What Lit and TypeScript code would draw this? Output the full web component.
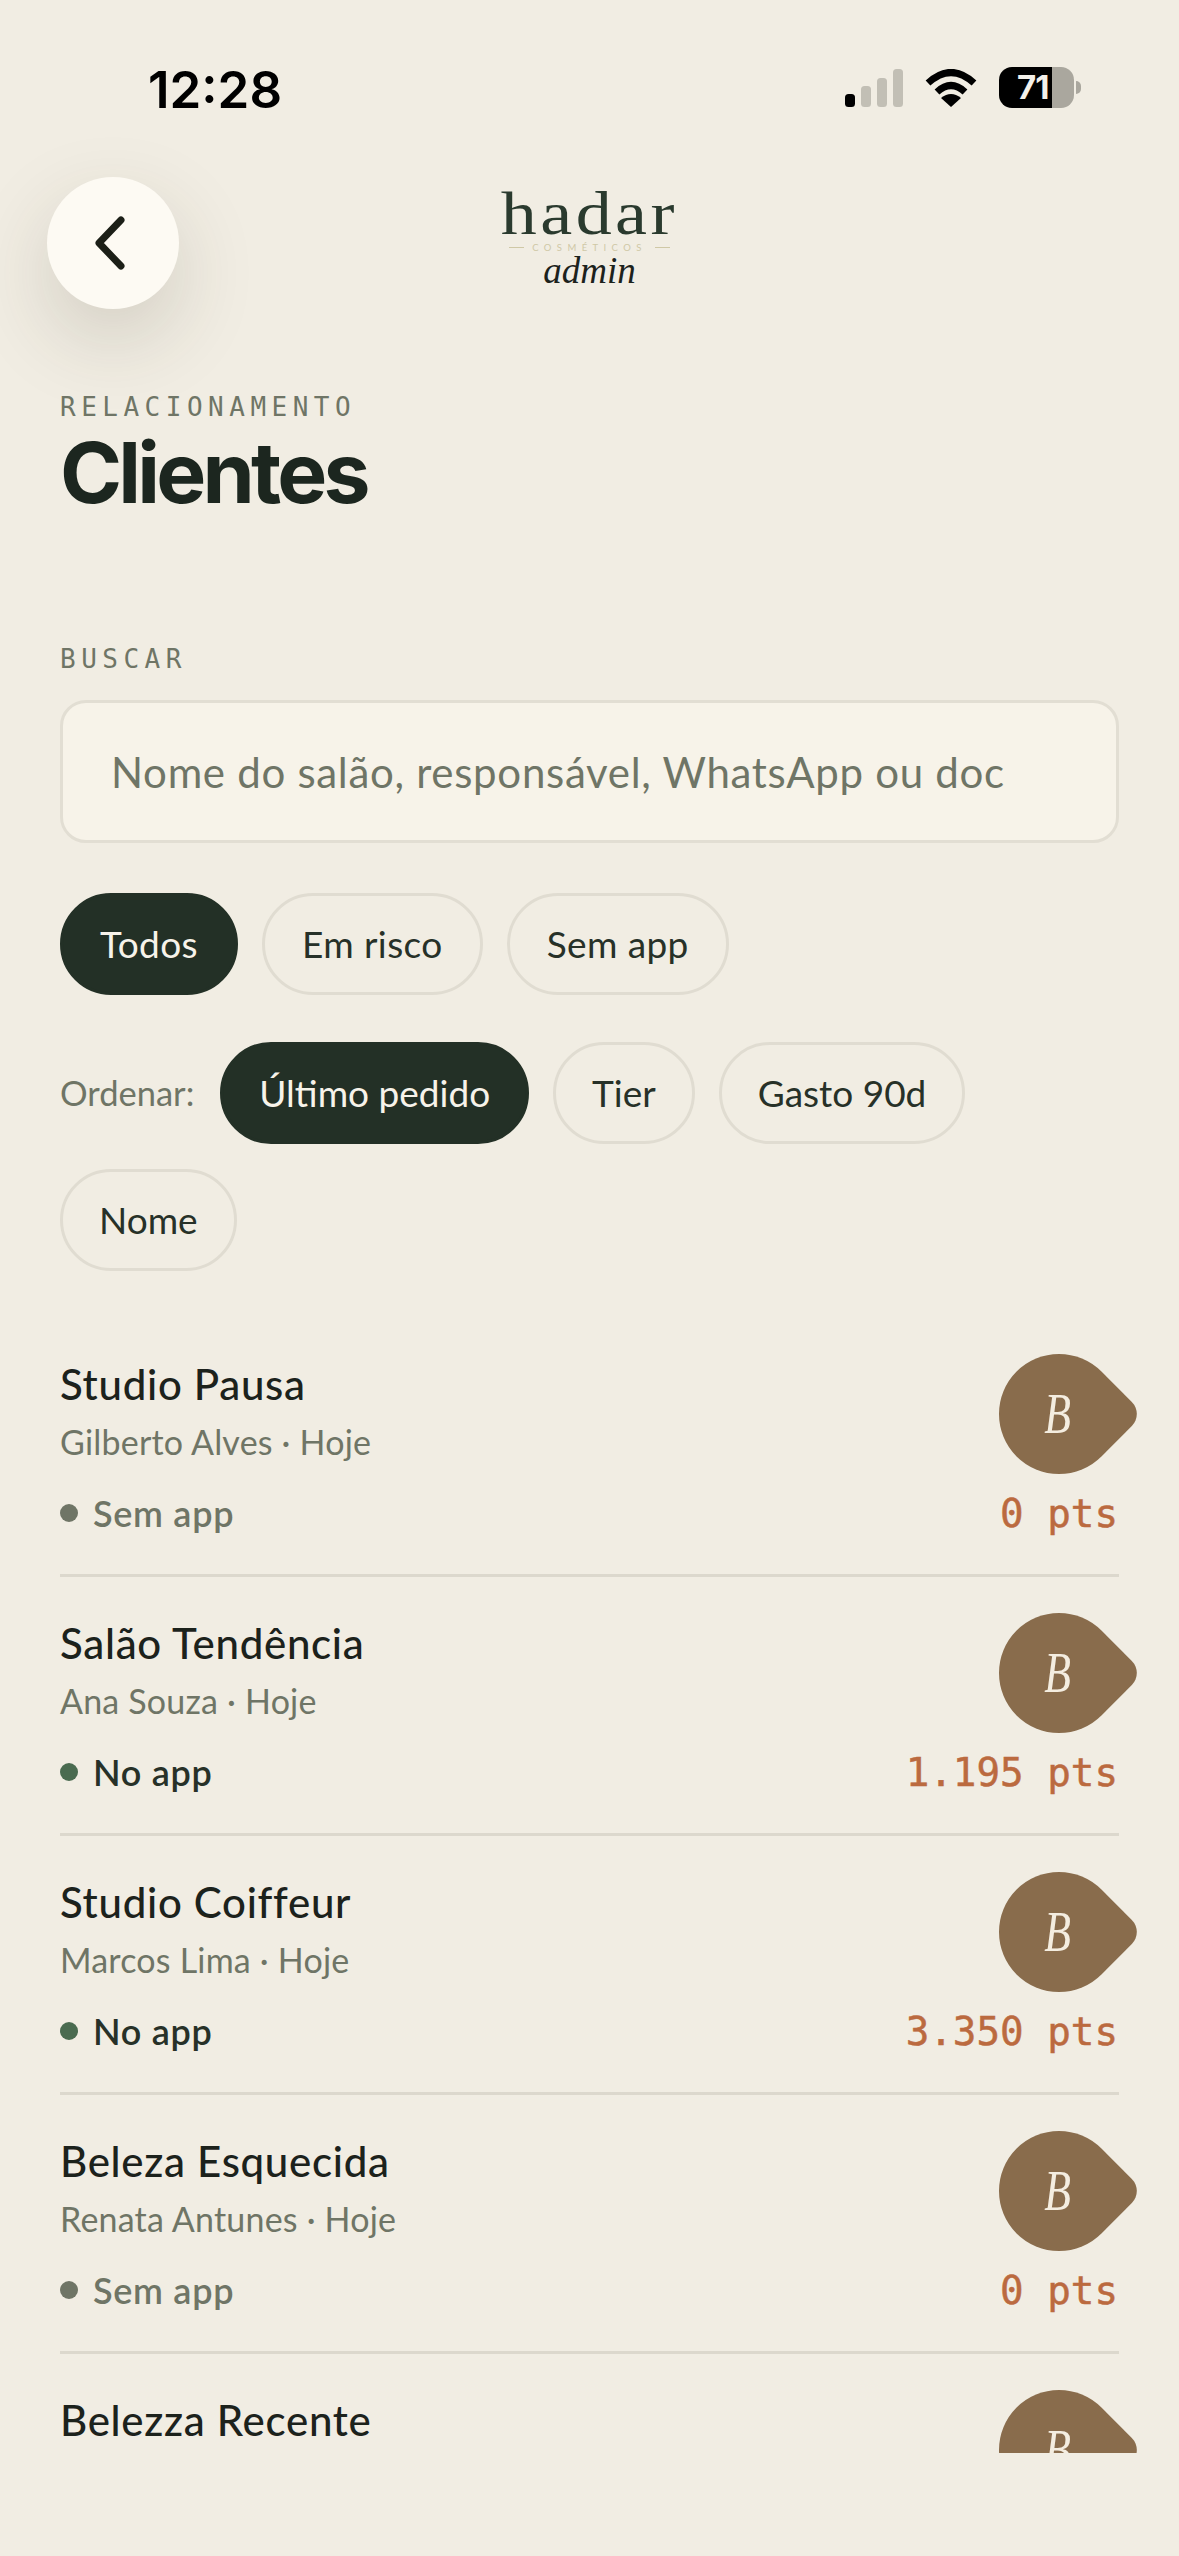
import { LitElement, html, css } from "lit";
import { customElement } from "lit/decorators.js";

type Row = { name: string; sub?: string; app?: boolean; pts?: string };
const rows: Row[] = [
  { name: "Studio Pausa", sub: "Gilberto Alves · Hoje", app: false, pts: "0 pts" },
  { name: "Salão Tendência", sub: "Ana Souza · Hoje", app: true, pts: "1.195 pts" },
  { name: "Studio Coiffeur", sub: "Marcos Lima · Hoje", app: true, pts: "3.350 pts" },
  { name: "Beleza Esquecida", sub: "Renata Antunes · Hoje", app: false, pts: "0 pts" },
  { name: "Belezza Recente" },
];

@customElement("app-root")
export class AppRoot extends LitElement {
  static styles = css`
    :host {
      display: block;
      width: 1179px;
      height: 2556px;
      background: #f1ede3;
      font-family: "Lato", "Open Sans", sans-serif;
      color: #1c221c;
      overflow: hidden;
    }
    .status {
      display: flex;
      justify-content: space-between;
      align-items: center;
      height: 41px;
      padding: 67px 98px 0 148px;
    }
    .time {
      font-family: "Inter", sans-serif;
      font-weight: 600;
      font-size: 51px;
      color: #000;
      line-height: 41px;
      margin-top: 4px;
    }
    .icons { display: flex; align-items: center; }
    .signal { width: 58px; height: 38px; display: block; }
    .wifi { width: 52px; height: 38px; display: block; margin-left: 22px; }
    .battery {
      display: flex;
      align-items: center;
      margin-left: 22px;
    }
    .batt-body {
      width: 75px;
      height: 41px;
      border-radius: 13px;
      background: linear-gradient(90deg, #000 0 53px, #aaa79e 53px);
      color: #f4f1ea;
      font-family: "Inter", sans-serif;
      font-weight: 700;
      font-size: 33px;
      line-height: 41px;
      text-align: left;
      padding-left: 18px;
      box-sizing: border-box;
      letter-spacing: -1px;
    }
    .batt-nub {
      width: 5px;
      height: 13px;
      margin-left: 2px;
      background: #aaa79e;
      border-radius: 0 5px 5px 0;
    }
    .top {
      display: grid;
      grid-template-columns: 1fr auto 1fr;
      padding: 69px 47px 0;
    }
    .back {
      width: 132px;
      height: 132px;
      border-radius: 50%;
      background: #fdfaf3;
      box-shadow: 0 30px 80px rgba(60, 55, 35, 0.17);
      display: flex;
      align-items: center;
      justify-content: center;
    }
    .back svg { width: 32px; height: 54px; display: block; margin-left: -7px; }
    .logo {
      text-align: center;
      padding-top: 7px;
      display: flex;
      flex-direction: column;
      align-items: center;
    }
    .hadar {
      font-family: "Liberation Serif", serif;
      font-size: 62px;
      line-height: 58px;
      letter-spacing: 3px;
      color: #2a3a2e;
      transform: scaleX(1.16);
    }
    .cos {
      display: flex;
      align-items: center;
      gap: 8px;
      font-family: "Lato", sans-serif;
      font-size: 9.5px;
      letter-spacing: 5.4px;
      color: #cfc8a6;
      line-height: 11px;
    }
    .cos i { display: block; width: 15px; height: 1px; background: #cfc8a6; }
    .admin {
      font-family: "Liberation Serif", serif;
      font-style: italic;
      font-size: 37px;
      line-height: 35px;
      color: #1c221c;
    }
    .head { padding: 0 60px; margin-top: 83px; }
    .eyebrow {
      font-family: "DejaVu Sans Mono", monospace;
      font-size: 26px;
      letter-spacing: 5.5px;
      line-height: 30px;
      color: #6f7566;
    }
    h1 {
      margin: 6px 0 0;
      font-family: "Inter", sans-serif;
      font-weight: 700;
      font-size: 84px;
      line-height: 90px;
      letter-spacing: -3.8px;
      color: #1c261f;
    }
    .search { padding: 0 60px; margin-top: 126px; }
    .input {
      margin-top: 26px;
      height: 143px;
      box-sizing: border-box;
      border: 3px solid #e2ded3;
      border-radius: 26px;
      background: #f7f3e9;
      display: flex;
      align-items: center;
      padding-left: 48px;
      font-size: 42px;
      letter-spacing: 0.7px;
      color: #6f7566;
    }
    .chips {
      display: flex;
      flex-wrap: wrap;
      align-items: center;
      gap: 25px 24px;
      padding: 0 60px;
    }
    .chips.a { margin-top: 49.5px; }
    .chips.a .chip { letter-spacing: 0.4px; }
    .chips.b { margin-top: 47px; }
    .chips.b .chip { padding: 0 36px; }
    .chip {
      height: 102px;
      box-sizing: border-box;
      border: 3px solid #e0dcd1;
      border-radius: 51px;
      padding: 0 37px;
      display: flex;
      align-items: center;
      font-size: 37px;
      color: #273128;
    }
    .chip.on { background: #233026; border-color: #233026; color: #f7f3ea; }
    .ord { font-size: 34.5px; color: #6f7566; margin-right: 2px; }
    .list {
      margin-top: 47px;
      height: 1135.5px;
      padding: 0 60px;
      overflow: hidden;
    }
    .row {
      display: flex;
      justify-content: space-between;
      height: 256px;
      border-bottom: 3px solid #dcd8cd;
    }
    .left { padding-top: 42px; }
    .name { font-size: 42px; line-height: 48px; letter-spacing: 0.7px; color: #1c221c; font-weight: 500; }
    .sub { font-size: 34px; line-height: 40px; letter-spacing: 0.2px; color: #6f7566; margin-top: 14px; }
    .stat {
      display: flex;
      align-items: center;
      gap: 15px;
      margin-top: 29px;
      font-size: 36px;
      letter-spacing: 0.7px;
      line-height: 44px;
      font-weight: 600;
      color: #6f7566;
    }
    .stat.ok { color: #273128; }
    .dot { width: 18px; height: 18px; border-radius: 50%; background: #6f7566; }
    .stat.ok .dot { background: #4a6b50; }
    .right {
      display: flex;
      flex-direction: column;
      align-items: flex-end;
      padding-top: 36px;
    }
    .av {
      width: 120px;
      height: 120px;
      background: #896c4c;
      border-radius: 50% 17px 50% 50%;
      transform: rotate(45deg);
      display: flex;
      align-items: center;
      justify-content: center;
    }
    .av span {
      transform: translate(-1px, 1px) rotate(-45deg) scaleX(0.78);
      font-family: "Liberation Serif", serif;
      font-style: italic;
      font-size: 56px;
      color: #f4ede0;
    }
    .pts {
      margin-top: 17px;
      font-family: "DejaVu Sans Mono", monospace;
      font-size: 39.2px;
      line-height: 46px;
      font-weight: 400;
      color: #bb6a3f;
      margin-right: 1px;
      -webkit-text-stroke: 0.5px #bb6a3f;
    }
    .row:last-child { border-bottom: 0; }
  `;

  render() {
    return html`
      <div class="status">
        <div class="time">12:28</div>
        <div class="icons">
          <svg class="signal" viewBox="0 0 58 38">
            <rect x="0" y="25" width="10" height="13" rx="3.5" fill="#000"></rect>
            <rect x="16" y="17" width="10" height="21" rx="3.5" fill="#c2bfb5"></rect>
            <rect x="32" y="9" width="10" height="29" rx="3.5" fill="#c2bfb5"></rect>
            <rect x="48" y="0" width="10" height="38" rx="3.5" fill="#c2bfb5"></rect>
          </svg>
          <svg class="wifi" viewBox="0 0 52 38">
            <path d="M3 14 Q26 -7 49 14" fill="none" stroke="#000" stroke-width="7"></path>
            <path d="M12 23 Q26 10 40 23" fill="none" stroke="#000" stroke-width="7"></path>
            <path d="M26 38 L16 29 Q26 21 36 29 Z" fill="#000"></path>
          </svg>
          <div class="battery">
            <div class="batt-body">71</div>
            <div class="batt-nub"></div>
          </div>
        </div>
      </div>
      <div class="top">
        <div class="back">
          <svg viewBox="0 0 32 54">
            <path d="M27 4 L5 27 L27 50" fill="none" stroke="#1c1f17" stroke-width="7" stroke-linecap="round" stroke-linejoin="round"></path>
          </svg>
        </div>
        <div class="logo">
          <div class="hadar">hadar</div>
          <div class="cos"><i></i>COSMÉTICOS<i></i></div>
          <div class="admin">admin</div>
        </div>
        <div></div>
      </div>
      <div class="head">
        <div class="eyebrow">RELACIONAMENTO</div>
        <h1>Clientes</h1>
      </div>
      <div class="search">
        <div class="eyebrow">BUSCAR</div>
        <div class="input">Nome do salão, responsável, WhatsApp ou doc</div>
      </div>
      <div class="chips a">
        <div class="chip on">Todos</div>
        <div class="chip">Em risco</div>
        <div class="chip">Sem app</div>
      </div>
      <div class="chips b">
        <span class="ord">Ordenar:</span>
        <div class="chip on">Último pedido</div>
        <div class="chip">Tier</div>
        <div class="chip">Gasto 90d</div>
        <div class="chip">Nome</div>
      </div>
      <div class="list">
        ${rows.map(
          (r) => html`
            <div class="row">
              <div class="left">
                <div class="name">${r.name}</div>
                ${r.sub
                  ? html`<div class="sub">${r.sub}</div>
                      <div class="stat ${r.app ? "ok" : ""}">
                        <span class="dot"></span>${r.app ? "No app" : "Sem app"}
                      </div>`
                  : ""}
              </div>
              <div class="right">
                <div class="av"><span>B</span></div>
                ${r.pts ? html`<div class="pts">${r.pts}</div>` : ""}
              </div>
            </div>
          `
        )}
      </div>
    `;
  }
}
